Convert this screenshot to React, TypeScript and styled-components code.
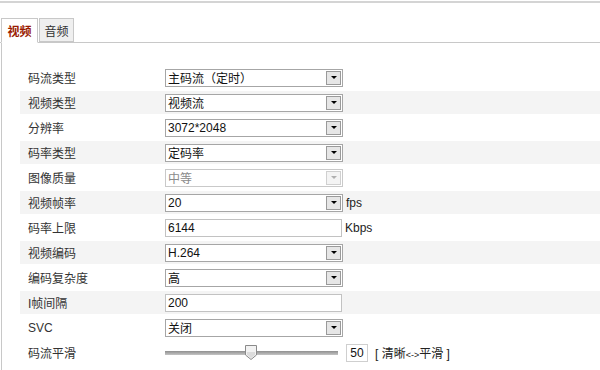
import React from 'react';
import styled, { createGlobalStyle, css } from 'styled-components';

const GlobalStyle = createGlobalStyle`
  html, body {
    margin: 0;
    padding: 0;
    background: #fff;
  }
  body {
    font-family: "Liberation Sans", "Noto Sans CJK SC", sans-serif;
    font-size: 12px;
    color: #333;
  }
`;

const Page = styled.div`
  width: 600px;
  height: 370px;
  overflow: hidden;
`;

const TopRule = styled.div`
  margin-top: 1px;
  border-top: 2px solid #d4d4d4;
`;

const TabBar = styled.div`
  display: flex;
  gap: 1px;
  margin-top: 15px;
  padding-left: 1px;
  height: 24px;
  border-bottom: 1px solid #c8c8c8;
`;

const Tab = styled.div<{ $active?: boolean }>`
  display: flex;
  align-items: center;
  justify-content: center;
  box-sizing: border-box;
  height: 25px;
  white-space: nowrap;
  border: 1px solid #c8c8c8;
  font-family: "Noto Sans CJK SC", sans-serif;
  font-size: 12px;
  ${(p) =>
    p.$active
      ? css`
          width: 37px;
          background: #fff;
          border-bottom-color: #fff;
          color: #9a1a00;
          font-weight: bold;
        `
      : css`
          width: 35px;
          height: 24px;
          background: #efefef;
          color: #333;
        `}
`;

const Panel = styled.div`
  margin-left: 1px;
  border-left: 1px solid #c8c8c8;
  padding: 23px 0 0 18px;
  height: 320px;
`;

const Row = styled.div<{ $shaded?: boolean }>`
  display: grid;
  grid-template-columns: 137px auto;
  align-items: center;
  height: 23px;
  margin-bottom: 2px;
  padding-left: 8px;
  background: ${(p) => (p.$shaded ? '#f4f4f4' : '#fff')};
`;

const Label = styled.span`
  font-family: "Liberation Sans", "Noto Sans CJK SC", sans-serif;
  font-size: 12px;
  color: #333;
`;

const Field = styled.div`
  display: flex;
  align-items: center;
  gap: 3px;
`;

const SelectBox = styled.div<{ $disabled?: boolean }>`
  display: flex;
  align-items: center;
  box-sizing: border-box;
  width: 178px;
  height: 18px;
  padding-left: 2px;
  border: 1px solid ${(p) => (p.$disabled ? '#c9c9c9' : '#a6a6a6')};
  background: #fff;
  color: ${(p) => (p.$disabled ? '#8a8a8a' : '#111')};
  font-size: 12px;
`;

const ArrowButton = styled.div<{ $disabled?: boolean }>`
  margin-left: auto;
  margin-right: 1px;
  box-sizing: border-box;
  width: 15px;
  height: 14px;
  border: 1px solid ${(p) => (p.$disabled ? '#d0d0d0' : '#9a9a9a')};
  background: ${(p) => (p.$disabled ? '#f4f4f4' : '#e6e6e6')};
  display: flex;
  align-items: center;
  justify-content: center;
  &::after {
    content: '';
    border-left: 3px solid transparent;
    border-right: 3px solid transparent;
    border-top: 3px solid ${(p) => (p.$disabled ? '#b0b0b0' : '#000')};
  }
`;

const TextInput = styled.div`
  display: flex;
  align-items: center;
  box-sizing: border-box;
  width: 177px;
  height: 18px;
  padding-left: 2px;
  border: 1px solid #c2c2c2;
  background: #fff;
  color: #111;
`;

const Unit = styled.span`
  color: #222;
`;

const SliderTrack = styled.div`
  position: relative;
  width: 173px;
  height: 4px;
  margin-right: 5px;
  background: linear-gradient(#8f8f8f, #c4c4c4);
`;

const Thumb = styled.svg`
  position: absolute;
  top: -6px;
  left: 80px;
`;

const ValueBox = styled.div`
  box-sizing: border-box;
  width: 22px;
  height: 18px;
  border: 1px solid #cfcfcf;
  display: flex;
  align-items: center;
  justify-content: center;
  color: #111;
`;

const Hint = styled.span`
  margin-left: 4px;
  color: #222;
  small {
    font-size: 9px;
  }
`;

type Item =
  | { label: string; kind: 'select'; value: string; unit?: string; disabled?: boolean }
  | { label: string; kind: 'input'; value: string; unit?: string }
  | { label: string; kind: 'slider'; value: number };

const items: Item[] = [
  { label: '码流类型', kind: 'select', value: '主码流（定时）' },
  { label: '视频类型', kind: 'select', value: '视频流' },
  { label: '分辨率', kind: 'select', value: '3072*2048' },
  { label: '码率类型', kind: 'select', value: '定码率' },
  { label: '图像质量', kind: 'select', value: '中等', disabled: true },
  { label: '视频帧率', kind: 'select', value: '20', unit: 'fps' },
  { label: '码率上限', kind: 'input', value: '6144', unit: 'Kbps' },
  { label: '视频编码', kind: 'select', value: 'H.264' },
  { label: '编码复杂度', kind: 'select', value: '高' },
  { label: 'I帧间隔', kind: 'input', value: '200' },
  { label: 'SVC', kind: 'select', value: '关闭' },
  { label: '码流平滑', kind: 'slider', value: 50 },
];

const renderField = (item: Item) => {
  if (item.kind === 'select') {
    return (
      <Field>
        <SelectBox $disabled={item.disabled}>
          {item.value}
          <ArrowButton $disabled={item.disabled} />
        </SelectBox>
        {item.unit && <Unit>{item.unit}</Unit>}
      </Field>
    );
  }
  if (item.kind === 'input') {
    return (
      <Field>
        <TextInput>{item.value}</TextInput>
        {item.unit && <Unit>{item.unit}</Unit>}
      </Field>
    );
  }
  return (
    <Field>
      <SliderTrack>
        <Thumb width="12" height="15" viewBox="0 0 12 15">
          <path d="M0.5 0.5 H11.5 V10 L6 14.5 L0.5 10 Z" fill="#f2f2f2" stroke="#8a8a8a" />
          <path d="M2 7 H10 V10 L6 13 L2 10 Z" fill="#dcdcdc" />
        </Thumb>
      </SliderTrack>
      <ValueBox>{item.value}</ValueBox>
      <Hint>
        [ 清晰<small>&lt;-&gt;</small>平滑 ]
      </Hint>
    </Field>
  );
};

const App: React.FC = () => {
  return (
    <Page>
      <GlobalStyle />
      <TopRule />
      <TabBar>
        <Tab $active>视频</Tab>
        <Tab>音频</Tab>
      </TabBar>
      <Panel>
        {items.map((item, i) => (
          <Row key={item.label} $shaded={i % 2 === 1 && item.kind !== 'slider'}>
            <Label>{item.label}</Label>
            {renderField(item)}
          </Row>
        ))}
      </Panel>
    </Page>
  );
};

export default App;
